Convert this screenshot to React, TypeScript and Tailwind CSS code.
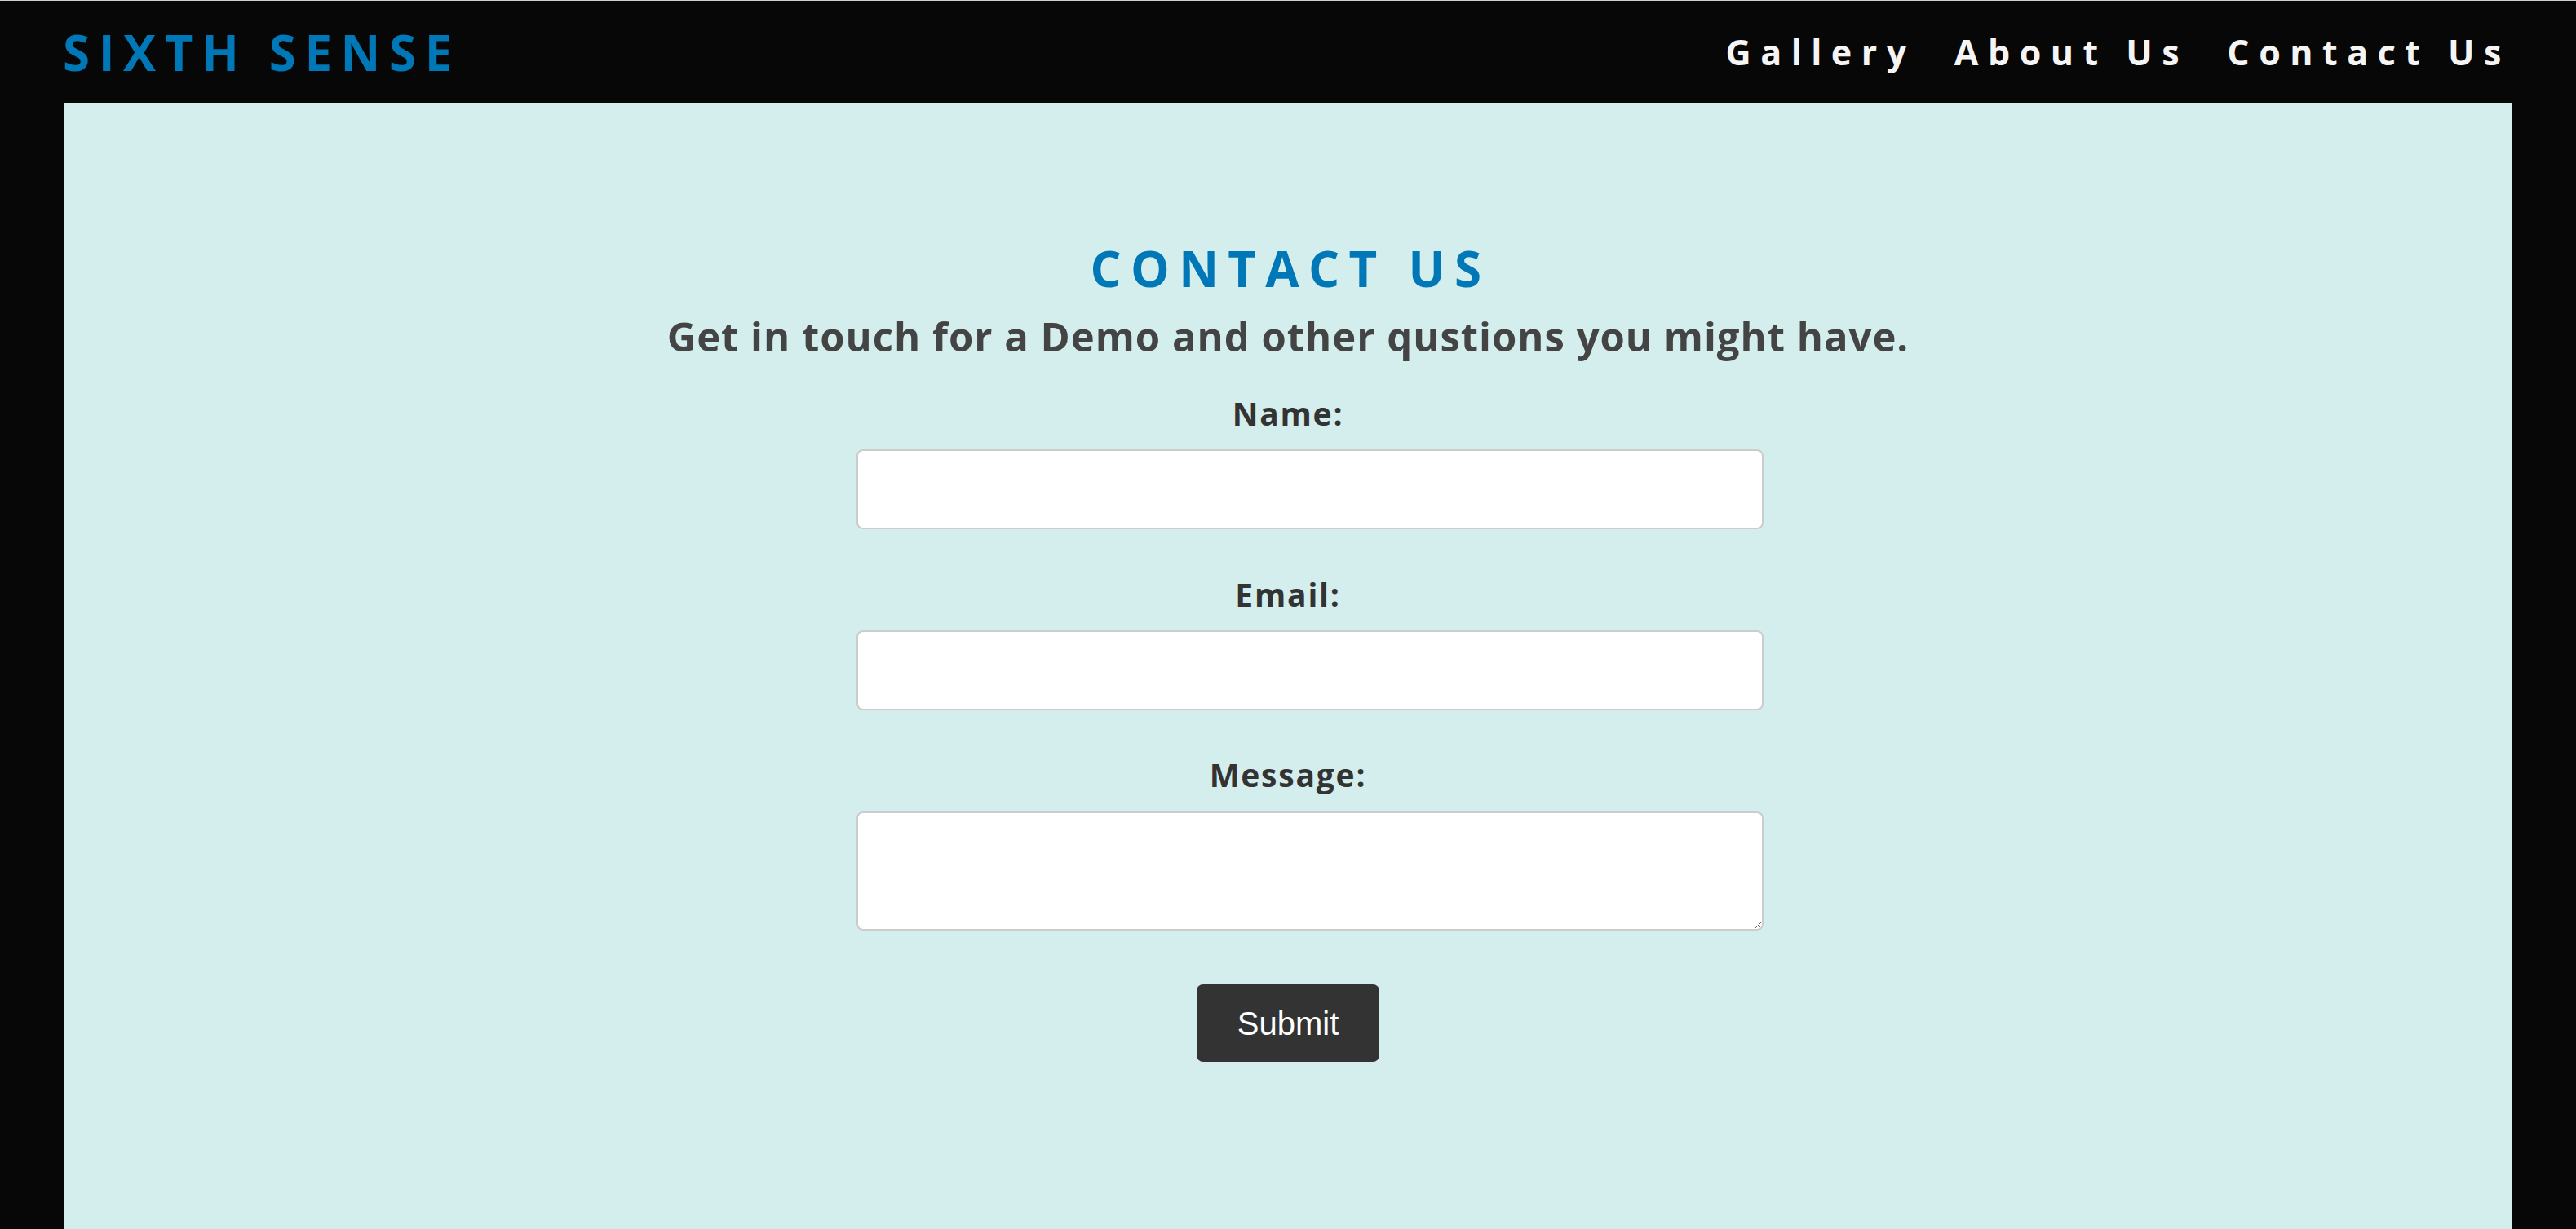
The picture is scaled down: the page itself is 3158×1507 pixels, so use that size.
import React from "react";

export default function App() {
  const font = { fontFamily: '"Open Sans", "Noto Sans", sans-serif' };
  return (
    <div className="h-screen w-full bg-[#070707] border-t border-[#cfcfcf] flex flex-col overflow-hidden" style={font}>
      <header className="h-[125px] shrink-0 flex items-center justify-between pl-[77px] pr-[80px]">
        <div className="text-[60px] leading-[60px] font-bold tracking-[10.6px] text-[#0077b6]">SIXTH SENSE</div>
        <nav className="flex items-center gap-[47px] text-[43px] leading-[43px] font-bold tracking-[11.5px] text-[#f5f5f5]">
          <a>Gallery</a>
          <a>About Us</a>
          <a>Contact Us</a>
        </nav>
      </header>
      <main className="flex-1 mx-[79px] bg-[#d4eeee] pt-[173px] flex flex-col items-center">
        <h2 className="text-[60px] leading-[60px] font-bold tracking-[11.3px] pl-[6px] text-[#0077b6]">CONTACT US</h2>
        <p className="mt-[29px] text-[49px] leading-[49px] font-bold tracking-[1px] text-[#444444]">
          Get in touch for a Demo and other qustions you might have.
        </p>
        <form className="mt-[50px] w-[1058px] flex flex-col items-center">
          <label className="text-[39px] leading-[39px] font-bold tracking-[1.8px] text-[#333333]">Name:</label>
          <input type="text" className="mt-[25px] self-start w-[1112px] max-w-none h-[98px] bg-white border-2 border-[#cccccc] rounded-[8px]" />
          <label className="mt-[60px] text-[39px] leading-[39px] font-bold tracking-[1.8px] text-[#333333]">Email:</label>
          <input type="email" className="mt-[25px] self-start w-[1112px] max-w-none h-[98px] bg-white border-2 border-[#cccccc] rounded-[8px]" />
          <label className="mt-[59px] text-[39px] leading-[39px] font-bold tracking-[1.8px] text-[#333333]">Message:</label>
          <textarea className="mt-[26px] self-start w-[1112px] max-w-none h-[146px] bg-white border-2 border-[#cccccc] rounded-[8px]" />
          <button
            type="button"
            className="mt-[66px] h-[95px] px-[50px] bg-[#333333] text-white rounded-[8px] text-[40px] leading-[40px]"
            style={{ fontFamily: '"Liberation Sans", Arial, sans-serif' }}
          >
            Submit
          </button>
        </form>
      </main>
    </div>
  );
}
